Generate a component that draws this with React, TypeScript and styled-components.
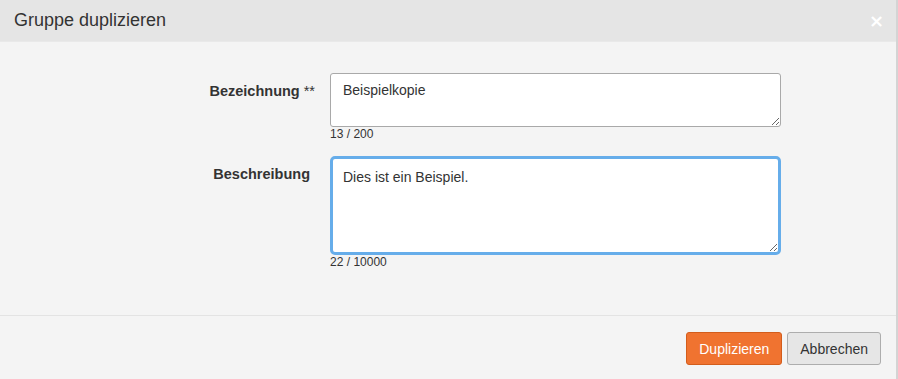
import styled, { createGlobalStyle } from "styled-components";

const GlobalStyle = createGlobalStyle`
  html, body {
    margin: 0;
    padding: 0;
    background: #f4f4f4;
  }
  body {
    font-family: "Liberation Sans", Arial, sans-serif;
    color: #333;
  }
`;

const fields = [
  { label: "Bezeichnung", marker: "**", value: "Beispielkopie", max: 200, rows: 54, focused: false },
  { label: "Beschreibung", marker: "", value: "Dies ist ein Beispiel.", max: 10000, rows: 99, focused: true },
];

function App() {
  return (
    <>
      <GlobalStyle />
      <Modal>
        <Header>
          <Title>Gruppe duplizieren</Title>
          <Close aria-label="Schließen">×</Close>
        </Header>
        <Body>
          {fields.map((f) => (
            <FormRow key={f.label}>
              <Label $hasMarker={!!f.marker}>
                {f.label}
                {f.marker && <Marker>{f.marker}</Marker>}
              </Label>
              <Field>
                <TextArea defaultValue={f.value} $height={f.rows} $focused={f.focused} />
                <Counter>
                  {f.value.length} / {f.max}
                </Counter>
              </Field>
            </FormRow>
          ))}
        </Body>
        <Footer>
          <Button $variant="primary">Duplizieren</Button>
          <Button $variant="default">Abbrechen</Button>
        </Footer>
      </Modal>
    </>
  );
}
export default App;

const Modal = styled.div`
  width: 896px;
  height: 379px;
  display: flex;
  flex-direction: column;
  background: #f4f4f4;
  border-right: 2px solid #d4d4d4;
`;

const Header = styled.div`
  height: 42px;
  flex-shrink: 0;
  display: flex;
  align-items: center;
  justify-content: space-between;
  padding: 0 12px 0 14px;
  background: #e5e5e5;
  border-bottom: 1px solid #e9e9e9;
  box-sizing: border-box;
`;

const Title = styled.h4`
  margin: 0;
  font-size: 18px;
  font-weight: normal;
  color: #333;
`;

const Close = styled.button`
  border: none;
  background: none;
  padding: 0;
  color: #fff;
  font-family: "DejaVu Sans", sans-serif;
  font-size: 18px;
  font-weight: bold;
  line-height: 1;
  cursor: pointer;
`;

const Body = styled.div`
  flex: 1;
  padding-top: 31px;
  display: flex;
  flex-direction: column;
  gap: 15px;
  border-bottom: 1px solid #e3e3e3;
`;

const FormRow = styled.div`
  display: grid;
  grid-template-columns: 315px 451px;
  column-gap: 15px;
  align-items: start;
`;

const Label = styled.label<{ $hasMarker: boolean }>`
  text-align: right;
  font-size: 14.5px;
  font-weight: bold;
  padding-top: 10px;
  padding-right: ${(p) => (p.$hasMarker ? "0" : "5px")};
  color: #333;
`;

const Marker = styled.span`
  margin-left: 4px;
  font-weight: normal;
`;

const Field = styled.div`
  display: flex;
  flex-direction: column;
`;

const TextArea = styled.textarea<{ $height: number; $focused: boolean }>`
  box-sizing: border-box;
  width: 100%;
  height: ${(p) => p.$height}px;
  padding: ${(p) => (p.$focused ? "9px 10px" : "7px 12px")};
  font-family: "Liberation Sans", Arial, sans-serif;
  font-size: 14px;
  color: #333;
  background: #fff;
  border: ${(p) => (p.$focused ? "3px solid #66adea" : "1px solid #a9a9a9")};
  border-radius: ${(p) => (p.$focused ? "5px" : "3px")};
  outline: none;
  resize: vertical;
  line-height: 1.4;
`;

const Counter = styled.span`
  font-size: 12px;
  color: #333;
`;

const Footer = styled.div`
  height: 63px;
  flex-shrink: 0;
  display: flex;
  justify-content: flex-end;
  align-items: flex-start;
  gap: 5px;
  padding: 16px 15px 0 0;
  box-sizing: border-box;
`;

const Button = styled.button<{ $variant: "primary" | "default" }>`
  height: 33px;
  padding: 0 12px;
  font-family: "Liberation Sans", Arial, sans-serif;
  font-size: 14px;
  border-radius: 3px;
  cursor: pointer;
  color: ${(p) => (p.$variant === "primary" ? "#fff" : "#333")};
  background: ${(p) => (p.$variant === "primary" ? "#f07330" : "#e6e6e6")};
  border: 1px solid ${(p) => (p.$variant === "primary" ? "#d35d1c" : "#adadad")};
`;
